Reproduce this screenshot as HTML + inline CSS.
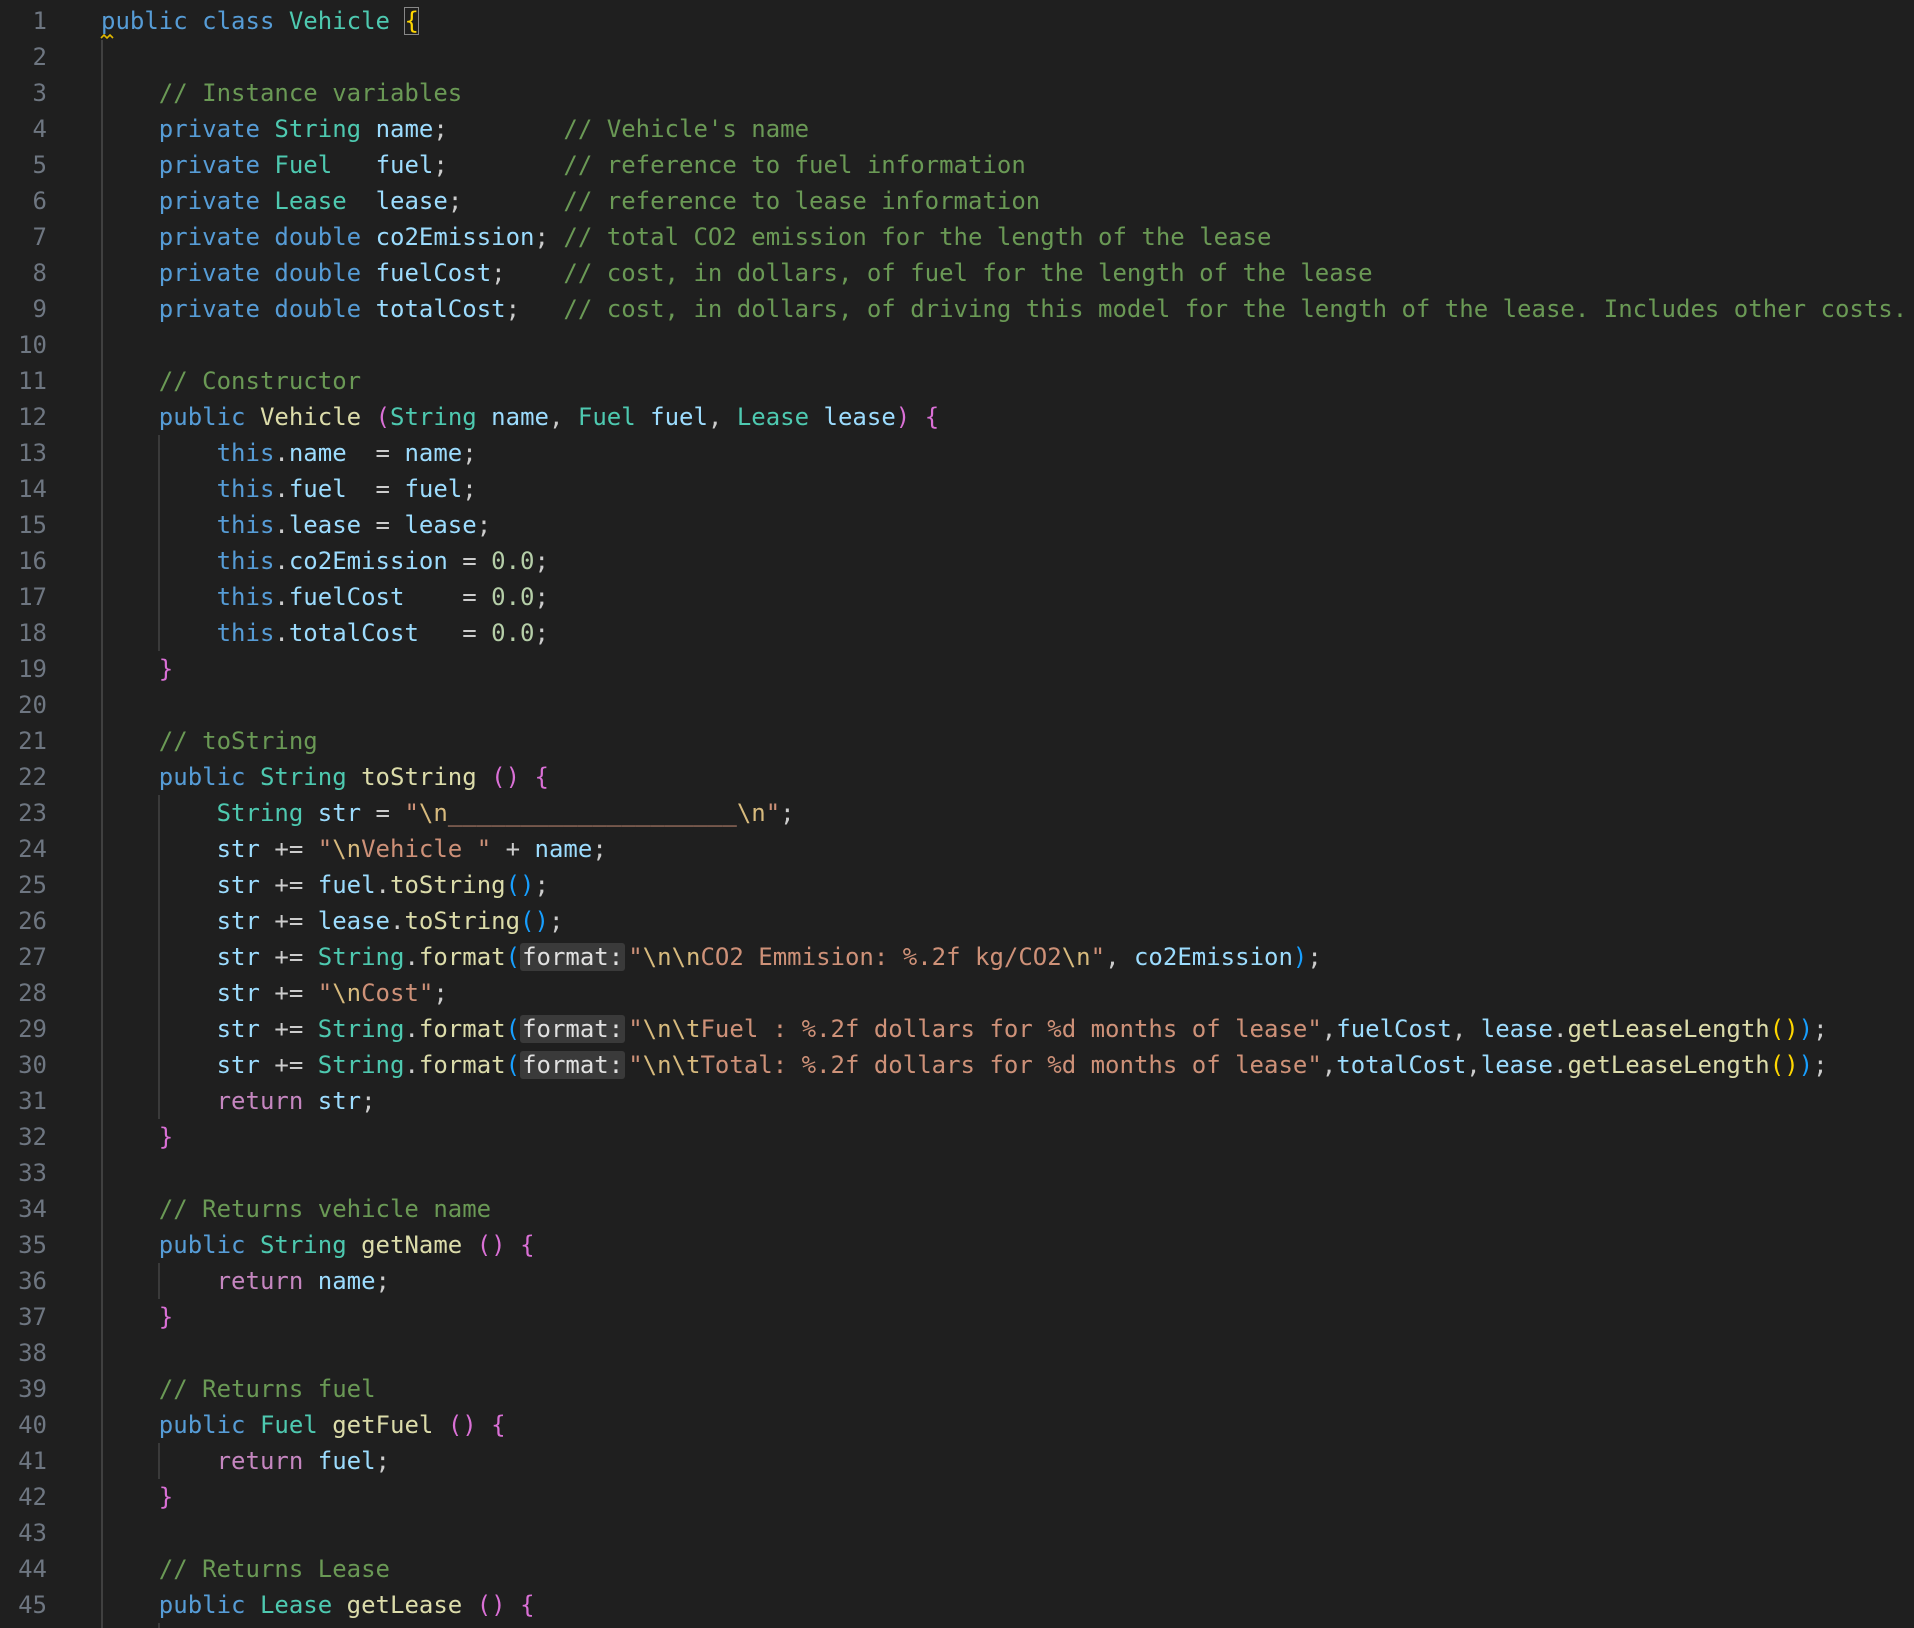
<!DOCTYPE html>
<html><head><meta charset="utf-8">
<style>
html,body{margin:0;padding:0;background:#1f1f1f;width:1914px;height:1628px;overflow:hidden}
#ed{position:relative;font-family:"DejaVu Sans Mono","Liberation Mono",monospace;font-size:24px;line-height:36px;color:#cccccc}
.l{position:absolute;left:0;height:36px;white-space:pre;width:1914px}
.n{position:absolute;left:0;width:47px;text-align:right;color:#6e7681}
.c{position:absolute;left:101px}
.g{position:absolute;width:2px;background:#404040}
.k{color:#569cd6}.t{color:#4ec9b0}.v{color:#9cdcfe}.cm{color:#6a9955}.s{color:#ce9178}.e{color:#d7ba7d}
.nu{color:#b5cea8}.f{color:#dcdcaa}.r{color:#c586c0}.b1{color:#ffd700}.b2{color:#da70d6}.b3{color:#179fff}.p{color:#d4d4d4}
.h{background:#3a3a3a;color:#e0e0e0;padding:0 2px;margin-right:3px;border-radius:3px}
</style></head><body>
<div id="ed">
<div class="g" style="left:101px;top:40px;height:1588px"></div>
<div class="g" style="left:158px;top:435px;height:216px;background:#3a3a3a"></div>
<div class="g" style="left:158px;top:795px;height:324px;background:#3a3a3a"></div>
<div class="g" style="left:158px;top:1263px;height:36px;background:#3a3a3a"></div>
<div class="g" style="left:158px;top:1443px;height:36px;background:#3a3a3a"></div>
<div class="l" style="top:3px"><span class="n">1</span><span class="c"><span class="k">public</span> <span class="k">class</span> <span class="t">Vehicle</span> <span class="b1" style="outline:1px solid #888;outline-offset:-1px">{</span></span></div>
<div class="l" style="top:39px"><span class="n">2</span></div>
<div class="l" style="top:75px"><span class="n">3</span><span class="c">    <span class="cm">// Instance variables</span></span></div>
<div class="l" style="top:111px"><span class="n">4</span><span class="c">    <span class="k">private</span> <span class="t">String</span> <span class="v">name</span>;        <span class="cm">// Vehicle's name</span></span></div>
<div class="l" style="top:147px"><span class="n">5</span><span class="c">    <span class="k">private</span> <span class="t">Fuel</span>   <span class="v">fuel</span>;        <span class="cm">// reference to fuel information</span></span></div>
<div class="l" style="top:183px"><span class="n">6</span><span class="c">    <span class="k">private</span> <span class="t">Lease</span>  <span class="v">lease</span>;       <span class="cm">// reference to lease information</span></span></div>
<div class="l" style="top:219px"><span class="n">7</span><span class="c">    <span class="k">private</span> <span class="k">double</span> <span class="v">co2Emission</span>; <span class="cm">// total CO2 emission for the length of the lease</span></span></div>
<div class="l" style="top:255px"><span class="n">8</span><span class="c">    <span class="k">private</span> <span class="k">double</span> <span class="v">fuelCost</span>;    <span class="cm">// cost, in dollars, of fuel for the length of the lease</span></span></div>
<div class="l" style="top:291px"><span class="n">9</span><span class="c">    <span class="k">private</span> <span class="k">double</span> <span class="v">totalCost</span>;   <span class="cm">// cost, in dollars, of driving this model for the length of the lease. Includes other costs.</span></span></div>
<div class="l" style="top:327px"><span class="n">10</span></div>
<div class="l" style="top:363px"><span class="n">11</span><span class="c">    <span class="cm">// Constructor</span></span></div>
<div class="l" style="top:399px"><span class="n">12</span><span class="c">    <span class="k">public</span> <span class="f">Vehicle</span> <span class="b2">(</span><span class="t">String</span> <span class="v">name</span>, <span class="t">Fuel</span> <span class="v">fuel</span>, <span class="t">Lease</span> <span class="v">lease</span><span class="b2">)</span> <span class="b2">{</span></span></div>
<div class="l" style="top:435px"><span class="n">13</span><span class="c">        <span class="k">this</span>.<span class="v">name</span>  = <span class="v">name</span>;</span></div>
<div class="l" style="top:471px"><span class="n">14</span><span class="c">        <span class="k">this</span>.<span class="v">fuel</span>  = <span class="v">fuel</span>;</span></div>
<div class="l" style="top:507px"><span class="n">15</span><span class="c">        <span class="k">this</span>.<span class="v">lease</span> = <span class="v">lease</span>;</span></div>
<div class="l" style="top:543px"><span class="n">16</span><span class="c">        <span class="k">this</span>.<span class="v">co2Emission</span> = <span class="nu">0.0</span>;</span></div>
<div class="l" style="top:579px"><span class="n">17</span><span class="c">        <span class="k">this</span>.<span class="v">fuelCost</span>    = <span class="nu">0.0</span>;</span></div>
<div class="l" style="top:615px"><span class="n">18</span><span class="c">        <span class="k">this</span>.<span class="v">totalCost</span>   = <span class="nu">0.0</span>;</span></div>
<div class="l" style="top:651px"><span class="n">19</span><span class="c">    <span class="b2">}</span></span></div>
<div class="l" style="top:687px"><span class="n">20</span></div>
<div class="l" style="top:723px"><span class="n">21</span><span class="c">    <span class="cm">// toString</span></span></div>
<div class="l" style="top:759px"><span class="n">22</span><span class="c">    <span class="k">public</span> <span class="t">String</span> <span class="f">toString</span> <span class="b2">()</span> <span class="b2">{</span></span></div>
<div class="l" style="top:795px"><span class="n">23</span><span class="c">        <span class="t">String</span> <span class="v">str</span> = <span class="s">"<span class="e">\n</span>____________________<span class="e">\n</span>"</span>;</span></div>
<div class="l" style="top:831px"><span class="n">24</span><span class="c">        <span class="v">str</span> += <span class="s">"<span class="e">\n</span>Vehicle "</span> + <span class="v">name</span>;</span></div>
<div class="l" style="top:867px"><span class="n">25</span><span class="c">        <span class="v">str</span> += <span class="v">fuel</span>.<span class="f">toString</span><span class="b3">()</span>;</span></div>
<div class="l" style="top:903px"><span class="n">26</span><span class="c">        <span class="v">str</span> += <span class="v">lease</span>.<span class="f">toString</span><span class="b3">()</span>;</span></div>
<div class="l" style="top:939px"><span class="n">27</span><span class="c">        <span class="v">str</span> += <span class="t">String</span>.<span class="f">format</span><span class="b3">(</span><span class="h">format:</span><span class="s">"<span class="e">\n\n</span>CO2 Emmision: %.2f kg/CO2<span class="e">\n</span>"</span>, <span class="v">co2Emission</span><span class="b3">)</span>;</span></div>
<div class="l" style="top:975px"><span class="n">28</span><span class="c">        <span class="v">str</span> += <span class="s">"<span class="e">\n</span>Cost"</span>;</span></div>
<div class="l" style="top:1011px"><span class="n">29</span><span class="c">        <span class="v">str</span> += <span class="t">String</span>.<span class="f">format</span><span class="b3">(</span><span class="h">format:</span><span class="s">"<span class="e">\n\t</span>Fuel : %.2f dollars for %d months of lease"</span>,<span class="v">fuelCost</span>, <span class="v">lease</span>.<span class="f">getLeaseLength</span><span class="b1">()</span><span class="b3">)</span>;</span></div>
<div class="l" style="top:1047px"><span class="n">30</span><span class="c">        <span class="v">str</span> += <span class="t">String</span>.<span class="f">format</span><span class="b3">(</span><span class="h">format:</span><span class="s">"<span class="e">\n\t</span>Total: %.2f dollars for %d months of lease"</span>,<span class="v">totalCost</span>,<span class="v">lease</span>.<span class="f">getLeaseLength</span><span class="b1">()</span><span class="b3">)</span>;</span></div>
<div class="l" style="top:1083px"><span class="n">31</span><span class="c">        <span class="r">return</span> <span class="v">str</span>;</span></div>
<div class="l" style="top:1119px"><span class="n">32</span><span class="c">    <span class="b2">}</span></span></div>
<div class="l" style="top:1155px"><span class="n">33</span></div>
<div class="l" style="top:1191px"><span class="n">34</span><span class="c">    <span class="cm">// Returns vehicle name</span></span></div>
<div class="l" style="top:1227px"><span class="n">35</span><span class="c">    <span class="k">public</span> <span class="t">String</span> <span class="f">getName</span> <span class="b2">()</span> <span class="b2">{</span></span></div>
<div class="l" style="top:1263px"><span class="n">36</span><span class="c">        <span class="r">return</span> <span class="v">name</span>;</span></div>
<div class="l" style="top:1299px"><span class="n">37</span><span class="c">    <span class="b2">}</span></span></div>
<div class="l" style="top:1335px"><span class="n">38</span></div>
<div class="l" style="top:1371px"><span class="n">39</span><span class="c">    <span class="cm">// Returns fuel</span></span></div>
<div class="l" style="top:1407px"><span class="n">40</span><span class="c">    <span class="k">public</span> <span class="t">Fuel</span> <span class="f">getFuel</span> <span class="b2">()</span> <span class="b2">{</span></span></div>
<div class="l" style="top:1443px"><span class="n">41</span><span class="c">        <span class="r">return</span> <span class="v">fuel</span>;</span></div>
<div class="l" style="top:1479px"><span class="n">42</span><span class="c">    <span class="b2">}</span></span></div>
<div class="l" style="top:1515px"><span class="n">43</span></div>
<div class="l" style="top:1551px"><span class="n">44</span><span class="c">    <span class="cm">// Returns Lease</span></span></div>
<div class="l" style="top:1587px"><span class="n">45</span><span class="c">    <span class="k">public</span> <span class="t">Lease</span> <span class="f">getLease</span> <span class="b2">()</span> <span class="b2">{</span></span></div>
<div style="position:absolute;left:158px;top:1623px;width:2px;height:5px;background:#3a3a3a"></div>
<svg style="position:absolute;left:100px;top:33px" width="16" height="8"><path d="M1 5 L4 2 L7 5 L10 2 L13 5" stroke="#e0b800" stroke-width="1.6" fill="none"/></svg>
</div>
</body></html>
